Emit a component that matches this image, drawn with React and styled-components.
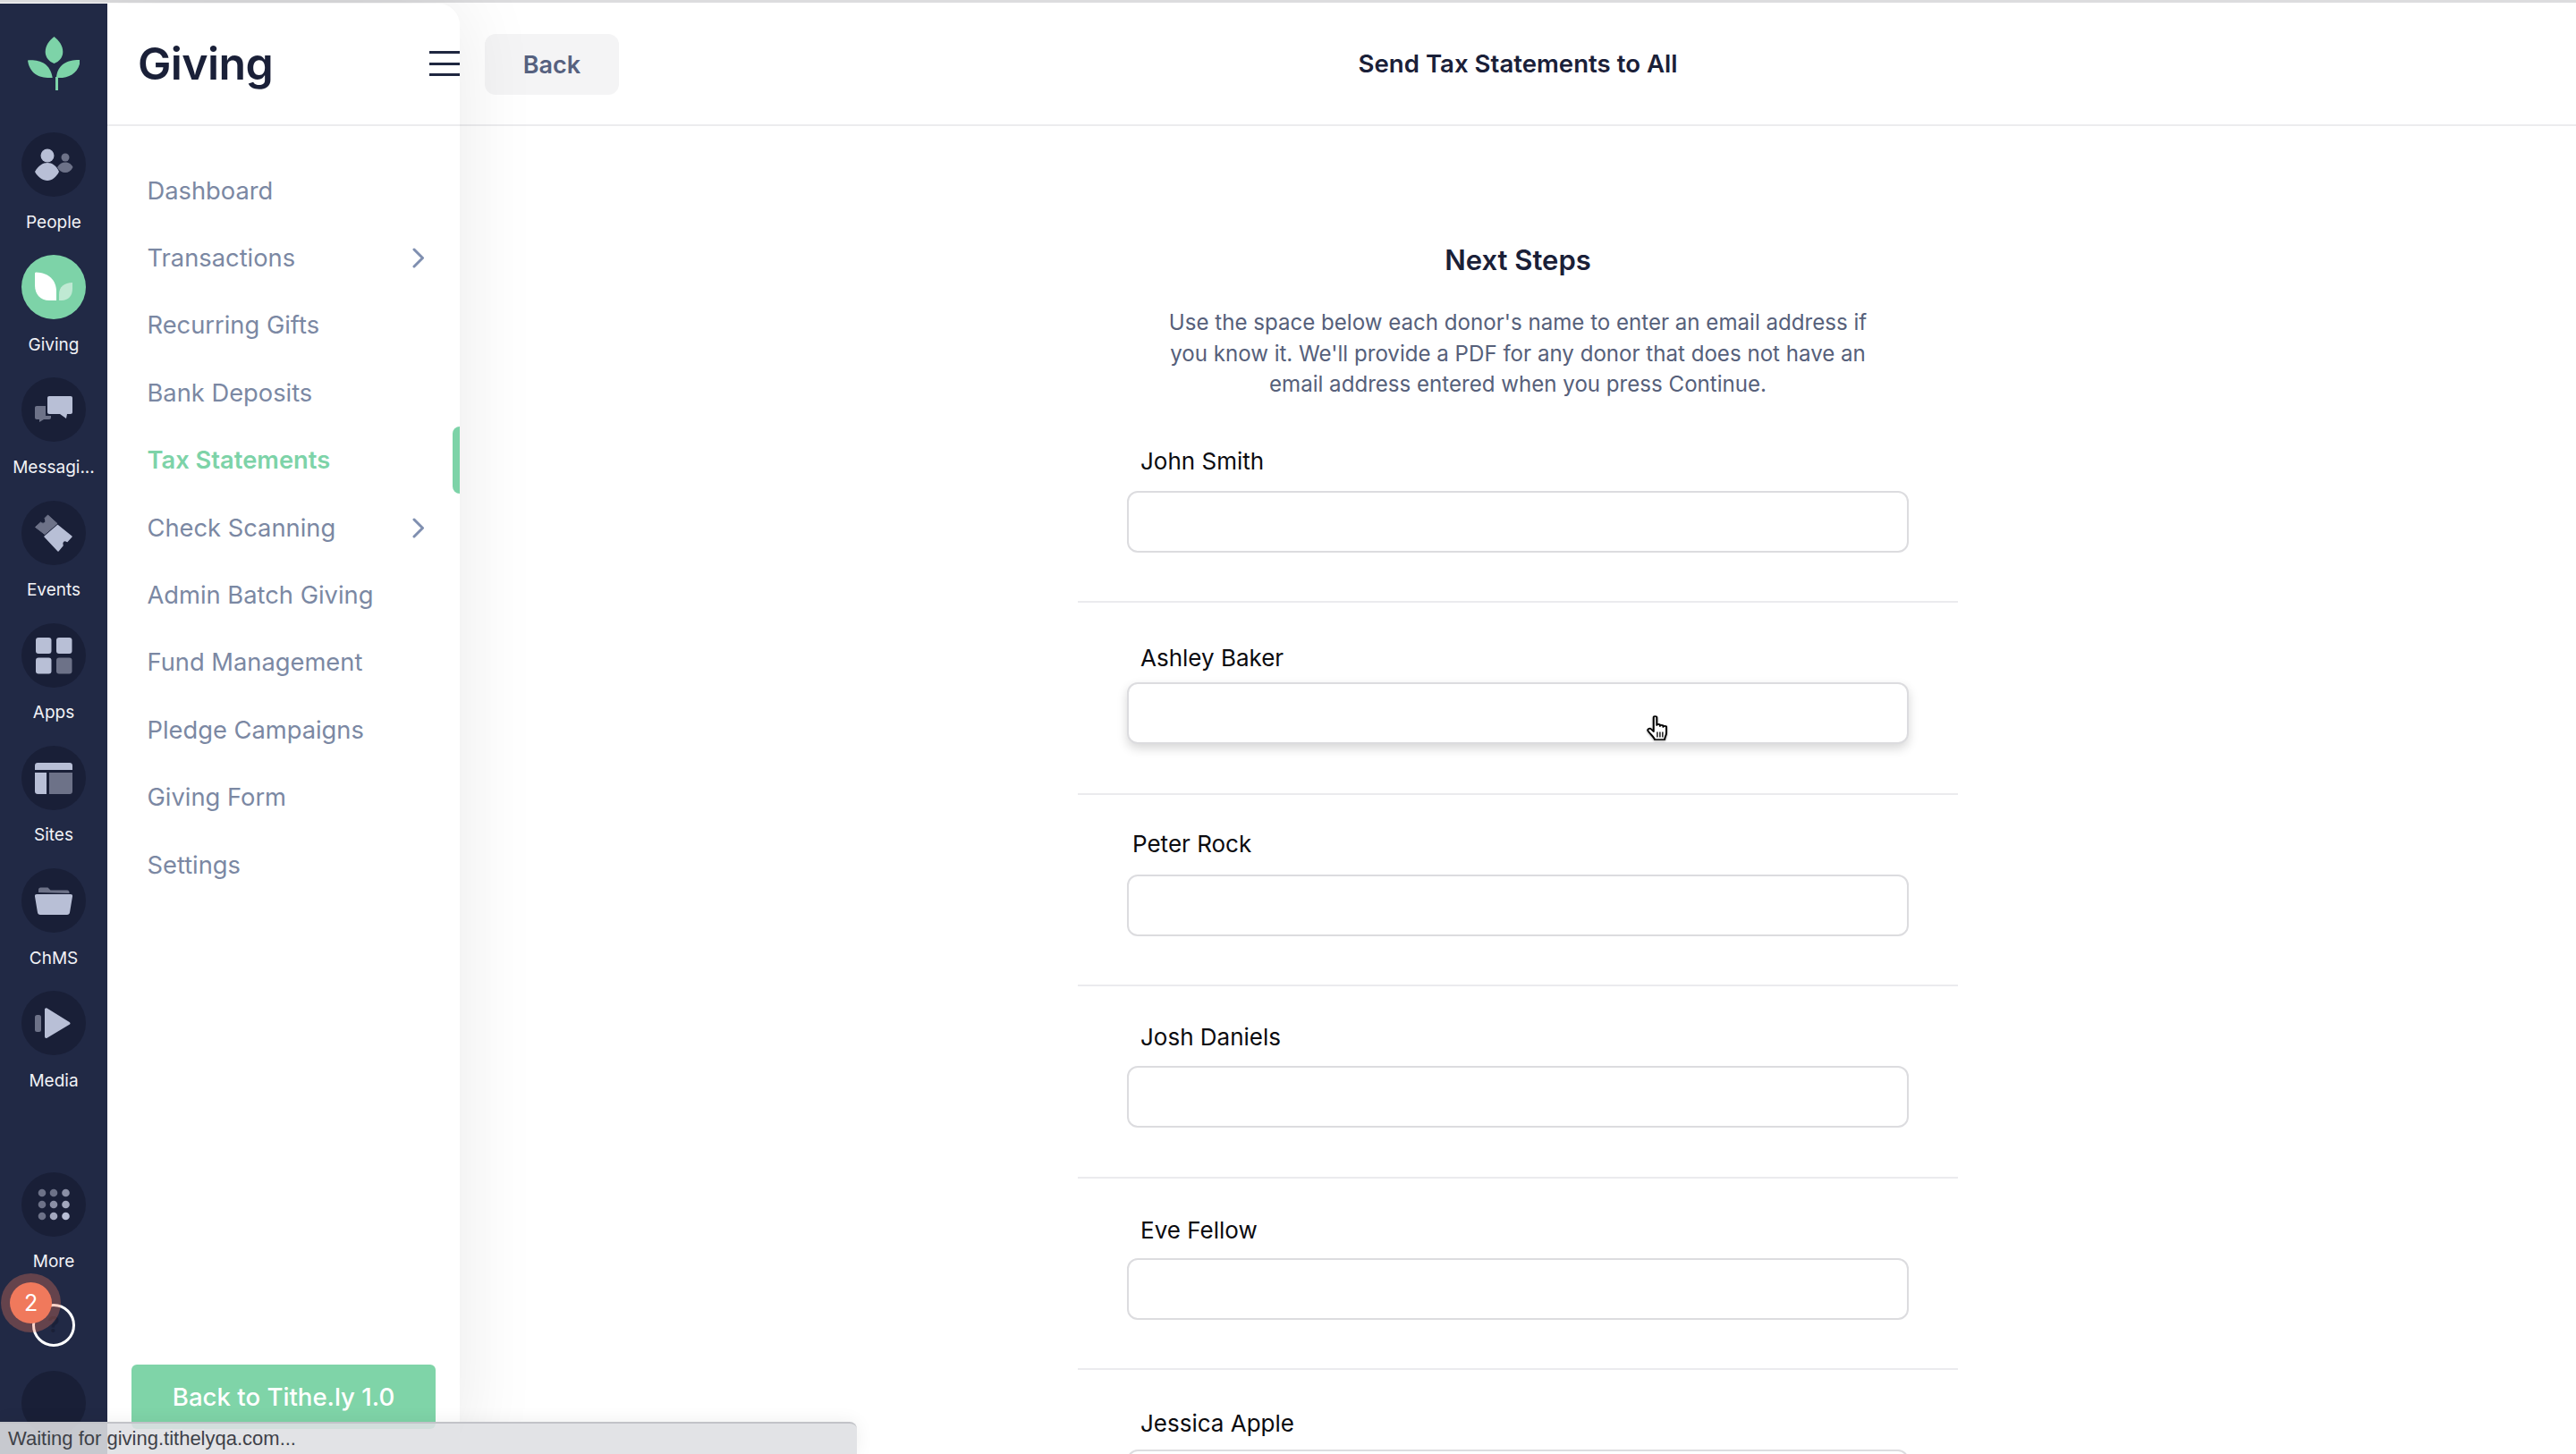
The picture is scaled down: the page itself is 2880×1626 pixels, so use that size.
import React from "react";
import styled, { createGlobalStyle } from "styled-components";

const Global = createGlobalStyle`
  html, body { margin: 0; padding: 0; background: #fff; }
  body { font-family: Inter, "Liberation Sans", sans-serif; overflow: hidden; }
  * { box-sizing: border-box; }
`;

const Page = styled.div`
  width: 2880px; height: 1626px; display: flex; flex-direction: column;
  overflow: hidden; position: relative; background: #fff;
`;
const TopLine = styled.div`
  height: 4px; flex: none; background: #fff; border-top: 3px solid #dcdcde;
`;
const Body = styled.div`display: flex; flex: 1; min-height: 0;`;

const Rail = styled.aside`
  width: 120px; flex: none; background: #212945; display: flex; flex-direction: column;
  align-items: center; padding-top: 36px; overflow: hidden; position: relative; z-index: 2;
`;
const LogoMark = styled.svg`width: 58px; height: 61px; flex: none; margin-bottom: 47px;`;
const RailItem = styled.div`
  flex: none; height: 137.2px; width: 100%; display: flex; flex-direction: column; align-items: center;
  margin-top: ${p => p.$offset || 0}px;
`;
const RailCircle = styled.div`
  width: 72px; height: 72px; border-radius: 50%; flex: none;
  background: ${p => p.$active ? "#7dd3a8" : "#191f37"};
  margin-top: ${p => p.$offset || 0}px;
`;
const RailIcon = styled.svg`width: 72px; height: 72px; display: block;`;
const RailLabel = styled.span`
  margin-top: 16.5px; font-size: 19px; line-height: 24px; color: #f1f2f6; white-space: nowrap;
`;
const HelpRing = styled.div`
  flex: none; margin-top: 10px; width: 48px; height: 48px; border-radius: 50%;
  border: 3.5px solid #fff; display: flex; align-items: center; justify-content: center;
  color: #1a2038; font-size: 24px; font-weight: 700; position: relative;
`;
const Badge = styled.span`
  position: absolute; left: -28px; top: -27px; width: 47px; height: 46px; border-radius: 50%;
  background: #f0795c; box-shadow: 0 0 0 10px rgba(240,121,92,.33); color: #fff;
  font-size: 25px; font-weight: 400; display: flex; align-items: center; justify-content: center;
`;

const Sidebar = styled.aside`
  width: 394px; flex: none; background: #fff; display: flex; flex-direction: column;
  border-top-right-radius: 24px; box-shadow: 0 0 90px rgba(0,0,0,.09); position: relative; z-index: 1;
`;
const SideHeader = styled.div`
  height: 137px; flex: none; border-bottom: 2px solid #ececee; display: flex; align-items: center;
  justify-content: space-between; padding-left: 34px; padding-bottom: 1px;
`;
const SideTitle = styled.h1`
  margin: 0; font-size: 50px; line-height: 60px; font-weight: 600; color: #1a2038; letter-spacing: -.6px;
`;
const Burger = styled.div`
  width: 34px; height: 28px; display: flex; flex-direction: column; justify-content: space-between;
  & > span { display: block; height: 3px; background: #1f2740; }
`;
const Nav = styled.nav`display: flex; flex-direction: column; padding-top: 34.5px;`;
const NavItem = styled.div`
  height: 75.4px; flex: none; display: flex; align-items: center; justify-content: space-between;
  padding: 0 39px 0 44.5px; position: relative; font-size: 27.3px;
  color: ${p => p.$active ? "#7dd3a8" : "#7b88a3"};
  font-weight: ${p => p.$active ? 600 : 400};
  ${p => p.$active && `
    &::after {
      content: ""; position: absolute; right: 0; top: 0; bottom: 0; width: 8px;
      background: #7dd3a8; border-radius: 9px 0 0 9px;
    }
  `}
`;
const Chevron = styled.svg`width: 14px; height: 23px; flex: none;`;
const LegacyButton = styled.div`
  margin: auto 27px 28px 27px; height: 72px; flex: none; background: #7fd4a8; border-radius: 6px;
  color: #fff; font-size: 27.6px; font-weight: 500; display: flex; align-items: center; justify-content: center;
`;

const Main = styled.main`flex: 1; min-width: 0; display: flex; flex-direction: column;`;
const MainHeader = styled.header`
  height: 137px; flex: none; border-bottom: 2px solid #ececee; display: flex; align-items: center;
  position: relative; justify-content: center; padding-bottom: 1px;
`;
const BackButton = styled.div`
  position: absolute; left: 28px; top: 34px; width: 150px; height: 68px; border-radius: 12px;
  background: #f4f4f5; color: #56617f; font-size: 27px; font-weight: 600;
  display: flex; align-items: center; justify-content: center;
`;
const HeaderTitle = styled.div`font-size: 27.6px; font-weight: 600; color: #1a2038;`;
const Form = styled.section`
  width: 984px; align-self: center; display: flex; flex-direction: column;
`;
const FormTitle = styled.h2`
  margin: 130px 0 0; font-size: 31px; line-height: 40px; font-weight: 600; color: #1a2038; text-align: center;
`;
const Intro = styled.p`
  margin: 33px auto 0; width: 800px; font-size: 24.1px; line-height: 34.5px; color: #56607a; text-align: center;
`;
const Row = styled.div`
  flex: none; padding-bottom: 54.5px; border-bottom: 2px solid #ebebee;
  &:last-child { border-bottom: 0; }
`;
const LabelZone = styled.div`
  height: ${p => p.$zone}px; display: flex; align-items: flex-end;
`;
const Label = styled.label`
  font-size: 26px; line-height: 30px; color: #0b0b0f;
  margin-left: ${p => p.$indent}px; margin-bottom: ${p => p.$offset - 15}px;
`;
const FieldWrap = styled.div`position: relative; margin-left: 55px; width: 874px; height: 69px;`;
const Field = styled.input`
  display: block; width: 100%; height: 100%; border: 2px solid #dcdcdf; border-radius: 12px;
  background: #fff; outline: 0; padding: 0 16px; font: inherit;
  box-shadow: ${p => p.$hover ? "0 5px 12px rgba(0,0,0,.16)" : "none"};
`;
const HandCursor = styled.svg`
  position: absolute; left: 581px; top: 37px; width: 25px; height: 28px;
  filter: drop-shadow(0 1px 1px rgba(0,0,0,.35));
`;
const StatusBar = styled.div`
  position: absolute; left: 0; bottom: 0; width: 958px; height: 36px; z-index: 5;
  background: rgba(222,223,227,.88); border-top: 2px solid #c2c3c8; border-top-right-radius: 8px;
  box-shadow: 0 0 20px rgba(0,0,0,.07);
  font-family: "Liberation Sans", sans-serif; font-size: 22px; line-height: 34px; color: #3e4148;
  padding-left: 9px; white-space: nowrap;
`;

const L = "#b8bfd6";
const D = "#6d7288";

const icons = {
  People: (
    <>
      <circle cx="29" cy="26" r="7.5" fill={L} />
      <path d="M15 44C19 37 24 34 29 34s10 3 13 10c-3 6-8 10-13 10s-11-4-14-10z" fill={L} />
      <circle cx="49" cy="28" r="4.5" fill={D} />
      <path d="M40 39c2.500-4 5.500-5.500 9-5.500s6.500 1.500 8.500 5.500c-2 4-5 6-8.500 6s-7-2-9-6z" fill={D} />
    </>
  ),
  Giving: (
    <>
      <path d="M15 21c0-1 .6-1.500 1.500-1.500C30 20 39 28 39 41v10H31C21 51 15 44 15 34z" fill="#fff" />
      <path d="M57 31.500V38c0 8-5 13-12 13h-3v-7c0-8 6-13 15-13z" fill="#bfe9d3" />
    </>
  ),
  Messaging: (
    <>
      <path d="M17 32h10v11h6v2c0 1.200-.8 2-2 2h-6l-5 3v-3h-3c-1.200 0-2-.8-2-2V34c0-1.200.8-2 2-2z" fill={D} />
      <path d="M31 21h24c1.200 0 2 .8 2 2v16c0 1.200-.8 2-2 2h-4l-1 5-7-5H31c-1.200 0-2-.8-2-2V23c0-1.200.8-2 2-2z" fill={L} />
    </>
  ),
  Events: (
    <>
      <path d="M15.500 29.500l6-5.500c1.500 1.500 3.500 1.500 4.500.5s1-3 0-5l3.500-3.500L40 25.500 26 37.500z" fill={D} stroke={D} strokeWidth="1" strokeLinejoin="round" />
      <path d="M26 40l14.500-12.500L56 40l-5 5.500c-1.500-1-3.500-1-4.500 0s-1 3-.5 4.500l-5 6z" fill={L} stroke={L} strokeWidth="1.500" strokeLinejoin="round" />
    </>
  ),
  Apps: (
    <>
      <rect x="16" y="16" width="17.500" height="18" rx="3" fill={L} />
      <rect x="39" y="16" width="17.500" height="18" rx="3" fill={L} />
      <rect x="16" y="38.500" width="17.500" height="18" rx="3" fill={L} />
      <rect x="39" y="38.500" width="17.500" height="18" rx="3" fill={D} />
    </>
  ),
  Sites: (
    <>
      <path d="M18 19h36c1.700 0 3 1.300 3 3v5H15v-5c0-1.700 1.300-3 3-3z" fill={L} />
      <path d="M15 30h13v24H18c-1.700 0-3-1.300-3-3z" fill={L} />
      <path d="M31 30h26v21c0 1.700-1.300 3-3 3H31z" fill={D} />
    </>
  ),
  ChMS: (
    <>
      <path d="M19 27v-3c0-1.500 1-2.500 2.500-2.500h8l3 3H51c1.500 0 2.500 1 2.500 2.500v1z" fill={D} />
      <path d="M17 29h38c1.500 0 2.300 1 2 2.500l-3 18c-.3 1.500-1.300 2.500-3 2.500H21c-1.700 0-2.700-1-3-2.500l-3-18c-.3-1.500.5-2.500 2-2.500z" fill={L} />
    </>
  ),
  Media: (
    <>
      <rect x="15" y="27" width="7" height="19" rx="2.500" fill={D} />
      <path d="M26 21c0-1.500 1.300-2.300 2.600-1.600l25 15.500c1.300.8 1.300 2 0 2.800l-25 15c-1.300.7-2.600 0-2.600-1.600z" fill={L} />
    </>
  ),
};

const railItems = [
  ["People", "People"],
  ["Giving", "Giving"],
  ["Messaging", "Messagi..."],
  ["Events", "Events"],
  ["Apps", "Apps"],
  ["Sites", "Sites"],
  ["ChMS", "ChMS"],
  ["Media", "Media"],
];

const dots = [
  [23, 23, D], [36, 23, D], [49.500, 23, "#8a8fa5"],
  [23, 36, D], [36, 36, "#8a8fa5"], [49.500, 36, "#a2a7bd"],
  [23, 49, D], [36, 49, "#a2a7bd"], [49.500, 49, L],
];

const navItems = [
  { name: "Dashboard" },
  { name: "Transactions", more: true },
  { name: "Recurring Gifts" },
  { name: "Bank Deposits" },
  { name: "Tax Statements", active: true },
  { name: "Check Scanning", more: true },
  { name: "Admin Batch Giving" },
  { name: "Fund Management" },
  { name: "Pledge Campaigns" },
  { name: "Giving Form" },
  { name: "Settings" },
];

const donors = [
  { name: "John Smith", indent: 70, offset: 33 },
  { name: "Ashley Baker", indent: 70, offset: 27, hover: true },
  { name: "Peter Rock", indent: 61, offset: 34 },
  { name: "Josh Daniels", indent: 70, offset: 32 },
  { name: "Eve Fellow", indent: 70, offset: 31 },
  { name: "Jessica Apple", indent: 70, offset: 29 },
];

export default function App() {
  return (
    <Page>
      <Global />
      <TopLine />
      <Body>
        <Rail>
          <LogoMark viewBox="0 0 58 61">
            <path d="M29.500 1C35 5.500 39.300 11 39.300 18c0 6-4 11-9.800 13-5.800-2-9.800-7-9.800-13 0-7 4.300-12.500 9.800-17z" fill="#7dd3a8" />
            <path d="M0 27.500C12 26.500 25 30 27.700 47 14 48 2 43 0 27.500z" fill="#7dd3a8" />
            <path d="M59 27C46 26.500 33 31 32 47c14 1 25-5 27-20z" fill="#7dd3a8" />
            <path d="M32.500 61V46" fill="none" stroke="#7dd3a8" strokeWidth="3" />
          </LogoMark>
          {railItems.map(([key, label]) => (
            <RailItem key={key}>
              <RailCircle $active={key === "Giving"}>
                <RailIcon viewBox="0 0 72 72">{icons[key]}</RailIcon>
              </RailCircle>
              <RailLabel>{label}</RailLabel>
            </RailItem>
          ))}
          <RailItem $offset={65}>
            <RailCircle>
              <RailIcon viewBox="0 0 72 72">
                {dots.map(([cx, cy, fill]) => (
                  <circle key={`${cx}-${cy}`} cx={cx} cy={cy} r="4.300" fill={fill} />
                ))}
              </RailIcon>
            </RailCircle>
            <RailLabel>More</RailLabel>
          </RailItem>
          <HelpRing>
            ?
            <Badge>2</Badge>
          </HelpRing>
          <RailCircle $offset={27} />
        </Rail>
        <Sidebar>
          <SideHeader>
            <SideTitle>Giving</SideTitle>
            <Burger><span /><span /><span /></Burger>
          </SideHeader>
          <Nav>
            {navItems.map(item => (
              <NavItem key={item.name} $active={item.active}>
                {item.name}
                {item.more && (
                  <Chevron viewBox="0 0 14 23">
                    <path d="M2 2l9.500 9.500L2 21" fill="none" stroke="#7f8fb0" strokeWidth="3" strokeLinecap="round" strokeLinejoin="round" />
                  </Chevron>
                )}
              </NavItem>
            ))}
          </Nav>
          <LegacyButton>Back to Tithe.ly 1.0</LegacyButton>
        </Sidebar>
        <Main>
          <MainHeader>
            <BackButton>Back</BackButton>
            <HeaderTitle>Send Tax Statements to All</HeaderTitle>
          </MainHeader>
          <Form>
            <FormTitle>Next Steps</FormTitle>
            <Intro>
              Use the space below each donor's name to enter an email address if you know it. We'll provide a PDF for any donor that does not have an email address entered when you press Continue.
            </Intro>
            {donors.map((d, i) => (
              <Row key={d.name}>
                <LabelZone $zone={i === 0 ? 101 : 89}>
                  <Label $indent={d.indent} $offset={d.offset}>{d.name}</Label>
                </LabelZone>
                <FieldWrap>
                  <Field $hover={d.hover} />
                  {d.hover && (
                    <HandCursor viewBox="0 0 21 28" preserveAspectRatio="none">
                      <path d="M6.500 2.200C6.500.6 9.500.6 9.500 2.200V11C9.500 9.500 12.500 9.500 12.500 11v1c0-1.500 3-1.500 3 0v1c0-1.500 3-1.500 3 0v6.500c0 3-1.600 5-1.600 7.500H7.500C7.500 25 3 20.500 1.300 17.300.4 15.300 2.800 13.700 4.300 15.500L6.500 18z" fill="#fff" stroke="#000" strokeWidth="1.700" strokeLinejoin="round" />
                      <path d="M10 18.500v6M12.500 18.500v6M15 18.500v6" stroke="#111" strokeWidth="1.200" fill="none" />
                    </HandCursor>
                  )}
                </FieldWrap>
              </Row>
            ))}
          </Form>
        </Main>
      </Body>
      <StatusBar>Waiting for giving.tithelyqa.com...</StatusBar>
    </Page>
  );
}
